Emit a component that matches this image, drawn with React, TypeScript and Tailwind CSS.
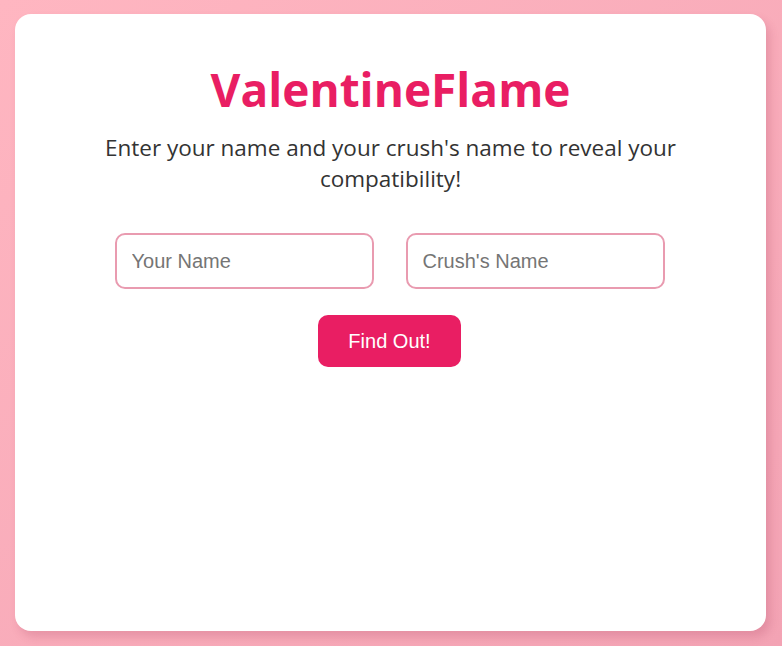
import React from "react";

export default function App() {
  return (
    <div className="w-[782px] h-[646px] bg-gradient-to-br from-[#ffb6c1] to-[#f3a3b4] pt-[14px] pl-[15px] pr-[16px] pb-[15px]">
      <div className="h-[617px] bg-white rounded-[16px] shadow-[4px_6px_10px_rgba(150,40,70,0.18)] flex flex-col items-center pt-[44px]">
        <h1 className="text-[#e91e63] font-bold text-[46px] leading-[62px] m-0 font-['Open_Sans','Noto_Sans',sans-serif]">
          ValentineFlame
        </h1>
        <p className="text-[#333333] text-[22.5px] leading-[31px] text-center w-[620px] mt-[12px] font-['Open_Sans','Noto_Sans',sans-serif]">
          Enter your name and your crush's name to reveal your compatibility!
        </p>
        <div className="flex gap-[32px] mt-[39px] pr-[2px]">
          <input
            placeholder="Your Name"
            className="w-[259px] h-[56px] border-2 border-[#e99bb0] rounded-[10px] px-[15px] text-[20px] text-[#333] placeholder:text-[#757575] outline-none font-['Liberation_Sans',Arial,sans-serif]"
          />
          <input
            placeholder="Crush's Name"
            className="w-[259px] h-[56px] border-2 border-[#e99bb0] rounded-[10px] px-[15px] text-[20px] text-[#333] placeholder:text-[#757575] outline-none font-['Liberation_Sans',Arial,sans-serif]"
          />
        </div>
        <button className="mt-[26px] mr-[2px] w-[143px] h-[52px] bg-[#e91e63] text-white rounded-[10px] text-[20px] font-['Liberation_Sans',Arial,sans-serif]">
          Find Out!
        </button>
      </div>
    </div>
  );
}
